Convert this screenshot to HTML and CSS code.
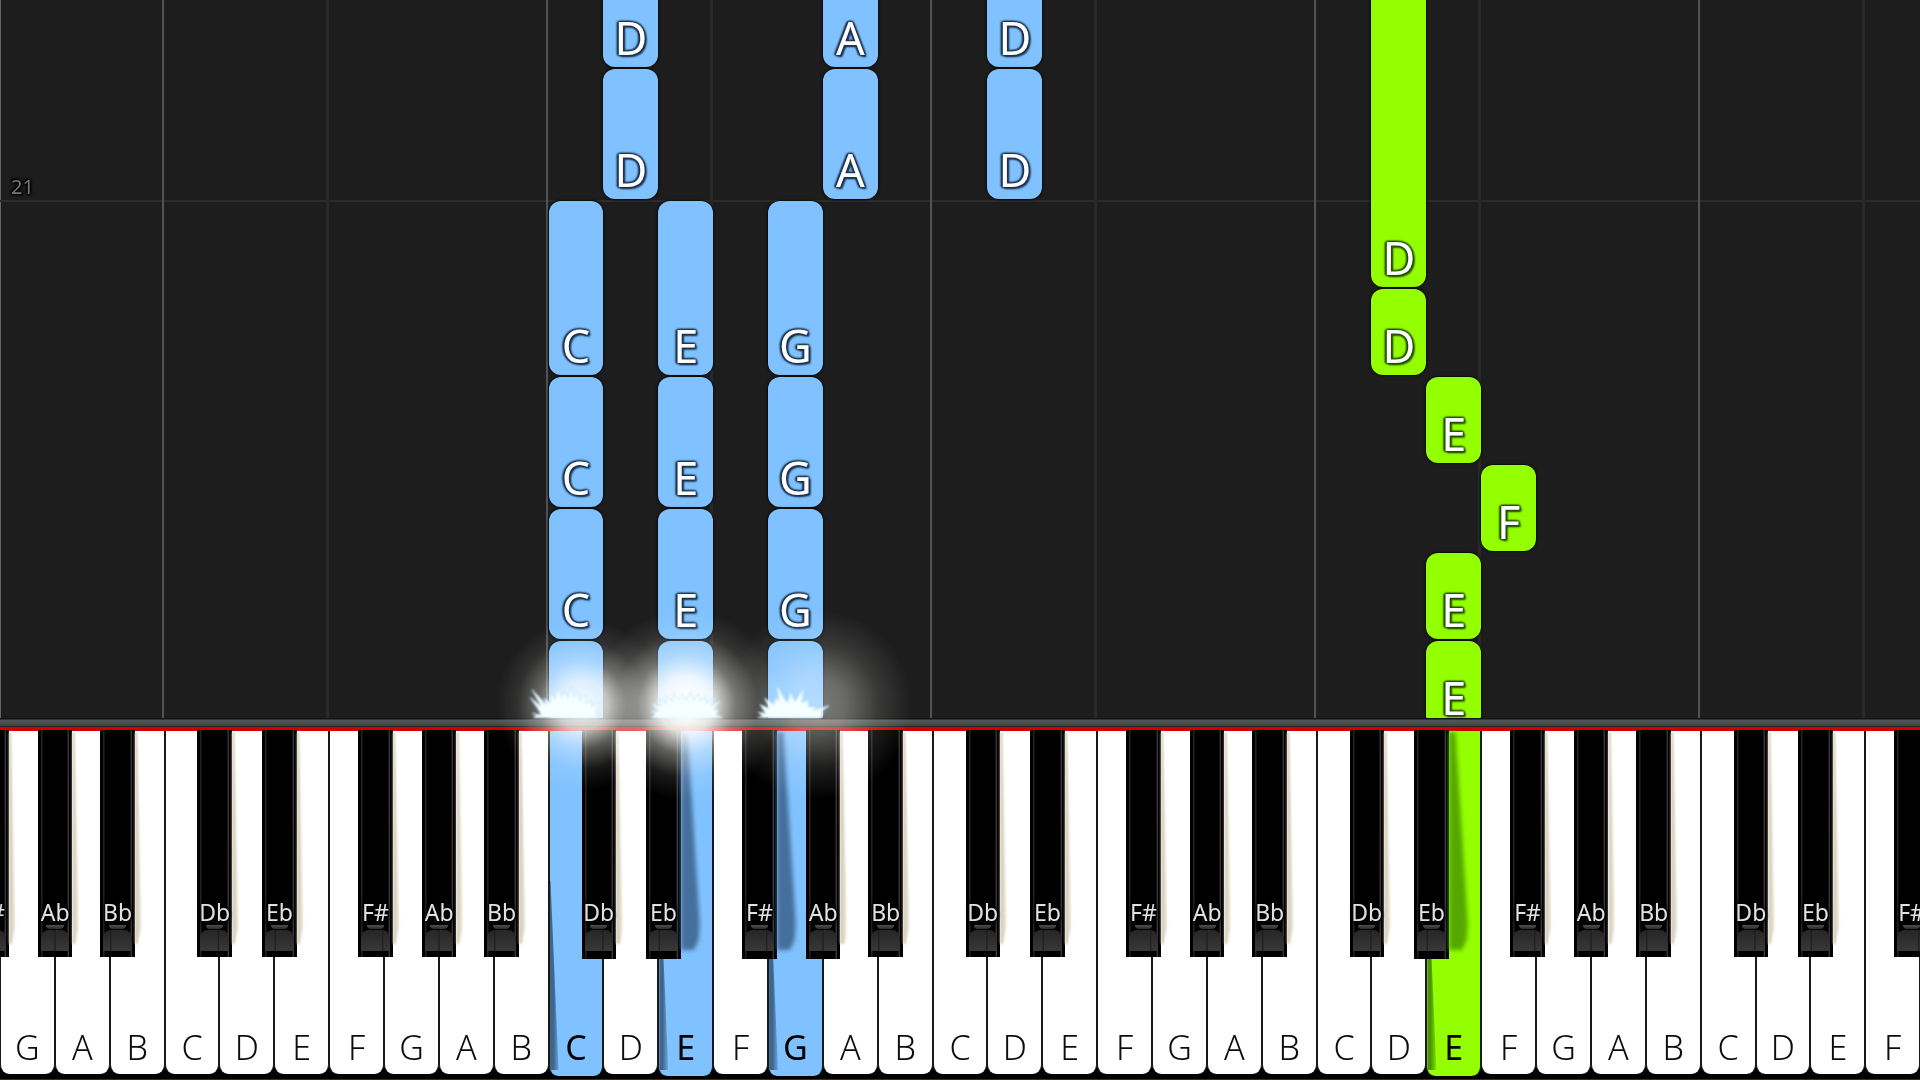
FILE: index.html
```html
<!DOCTYPE html>
<html lang="en">
<head>
    <meta charset="UTF-8">
    <meta name="viewport" content="width=device-width, initial-scale=1.0">
    <title>Piano roll</title>
    <link rel="stylesheet" href="styles.css">
</head>
<body>
    <main class="player">
        <section class="roll" id="roll" aria-label="Falling notes">
            <div class="measure"></div>
            <span class="measure-number">21</span>
        </section>
        <div class="rail"></div>
        <section class="keyboard" id="keyboard" aria-label="Piano keyboard"></section>
    </main>

    <script src="script.js"></script>
</body>
</html>
```

FILE: styles.css
```css
* {
    box-sizing: border-box;
}
body {
    margin: 0;
    background: #000;
    font-family: "Noto Sans", "Open Sans", sans-serif;
}
.player {
    display: flex;
    flex-direction: column;
    height: 100vh;
    min-height: 600px;
    overflow: hidden;
}

/* falling notes: one column per white key, one row per beat step */
.roll {
    flex: 1;
    min-height: 0;
    display: grid;
    grid-template-columns: repeat(35, 1fr);
    grid-template-rows: 24px repeat(16, 44px);
    align-content: start;
    overflow: hidden;
    background: #1d1d1d;
    box-shadow: inset 1px 0 #666;
}
.line {
    grid-row: 1 / -1;
    border-right: 3px solid #292929;
}
.line.octave {
    margin-right: 1px;
    border-right: 2px solid #525252;
}
.measure {
    grid-column: 1 / -1;
    grid-row: 6;
    border-top: 2px solid #2b2b2b;
}
.measure-number {
    grid-column: 1;
    grid-row: 5;
    align-self: end;
    padding-left: 11px;
    font-size: 20px;
    line-height: 26px;
    color: #777;
    text-shadow: 0 0 2px #000, 0 0 2px #000, 1px 1px 2px #000, -1px -1px 2px #000, 0 0 3px #000, 0 0 4px #000;
}
.note {
    position: relative;
    display: flex;
    justify-content: center;
    align-items: flex-end;
    margin: 1px 0;
    padding-bottom: 3px;
    border-radius: 12px;
    box-shadow: 0 0 2px 1px #0a0a0a;
    color: #fff;
    font-size: 45px;
    line-height: 52px;
}
.note.left {
    background: #80c2ff;
    text-shadow: 0 0 2px #1c3450, 1px 1px 2px #1c3450, -1px -1px 2px #1c3450, 1px -1px 2px #1c3450, -1px 1px 2px #1c3450, 2px 2px 2px #1c3450, -2px 0 2px #1c3450;
}
.note.right {
    background: #94ff00;
    text-shadow: 0 0 2px #245000, 1px 1px 2px #245000, -1px -1px 2px #245000, 1px -1px 2px #245000, -1px 1px 2px #245000, 2px 2px 2px #245000, -2px 0 2px #245000;
}
.note.from-above {
    margin-top: 0;
    border-top-left-radius: 0;
    border-top-right-radius: 0;
}

.rail {
    height: 13px;
    background: linear-gradient(#111 1px, #585858 2px, #404040 8px, #111 9px, #d00000 9px);
}

/* keyboard */
.keyboard {
    position: relative;
    display: flex;
    height: 349px;
    padding-bottom: 5px;
    background: #000;
    border-bottom: 1px solid #3a3018;
}
.slot {
    position: relative;
    flex: 1 1 0;
    min-width: 0;
}
.key {
    margin: 0;
    padding: 0;
    border: 0;
    font-family: inherit;
    cursor: pointer;
}
.white {
    position: relative;
    display: flex;
    justify-content: center;
    align-items: flex-end;
    width: 100%;
    height: 343px;
    padding-bottom: 5px;
    border: 1px solid #1a1a14;
    border-top: 0;
    border-bottom: 0;
    border-radius: 0 0 9px 9px;
    background: #fff;
    color: #0c0c0c;
    font-size: 34px;
    font-weight: 350;
    line-height: 44px;
}
.white.pressed {
    height: 345px;
    padding-bottom: 7px;
    color: #000;
    font-weight: 400;
}
.white.pressed.left {
    background: #80c2ff;
}
.white.pressed.right {
    background: #94ff00;
}
.white.pressed::before {
    content: "";
    position: absolute;
    left: 0;
    top: 150px;
    bottom: 6px;
    width: 9px;
    clip-path: polygon(0 0, 10% 0, 100% 100%, 0 100%);
    background: linear-gradient(90deg, #3f668f 40%, rgba(63, 102, 143, 0.3));
}
.white.pressed.right::before {
    background: linear-gradient(90deg, #4c9400 40%, rgba(76, 148, 0, 0.3));
}

.black {
    position: absolute;
    z-index: 2;
    top: -1px;
    left: 60%;
    width: 63%;
    height: 227px;
    background:
        linear-gradient(90deg, transparent 3px, #222 3px, #222 4px, transparent 5px),
        linear-gradient(270deg, transparent 3px, #3a3a3a 3px, #303030 4px, transparent 5px),
        #000;
}
.black.down {
    height: 229px;
}
.black.db { left: 60%; --seam: 64%; }
.black.eb { left: 78%; --seam: 35%; }
.black.fs { left: 53%; --seam: 75%; }
.black.ab { left: 69%; --seam: 50%; }
.black.bb { left: 83%; --seam: 27%; }
.black.edge {
    left: -47%;
}
.black .name {
    position: absolute;
    left: 50%;
    top: 168px;
    transform: translateX(-50%);
    font-size: 23px;
    line-height: 28px;
    color: #e2e2e2;
    text-shadow: 0 0 2px #000, 0 0 3px #000, 0 0 4px #000, 1px 1px 3px #000;
}
.black::before {
    content: "";
    position: absolute;
    left: 25%;
    right: 25%;
    top: 195px;
    height: 4px;
    border-radius: 0 0 9px 9px;
    background: linear-gradient(#505050, #2a2a2a);
}
.black::after {
    content: "";
    position: absolute;
    left: 3px;
    right: 3px;
    top: 200px;
    height: 21px;
    border-radius: 8px 8px 1px 1px;
    background:
        linear-gradient(90deg, transparent calc(var(--seam) - 1px), #191919 var(--seam), transparent calc(var(--seam) + 1px)),
        linear-gradient(#262626, #383838);
}
/* blur sits on the wrapper so that the cut shape inside gets soft edges */
.shade {
    position: absolute;
    z-index: -1;
    left: 100%;
    top: 2px;
    width: 6px;
    height: 212px;
    filter: blur(1px);
}
.shade::before {
    content: "";
    display: block;
    height: 100%;
    clip-path: polygon(0 0, 40% 0, 100% 92%, 50% 100%, 0 100%);
    background: linear-gradient(90deg, #d0ccba, #e4e0cf);
}
.down .shade {
    width: 19px;
    height: 218px;
    filter: blur(2px);
}
.down .shade::before {
    background: #456f9c;
    clip-path: polygon(-20% 0, 35% 0, 100% 88%, 95% 95%, 70% 100%, -20% 100%);
}
.down.over-right .shade::before {
    background: #55a800;
}
/* the black key right of the pressed one only sinks, its shade stays light */
.down.plain .shade {
    width: 6px;
    height: 212px;
    filter: blur(1px);
}
.down.plain .shade::before {
    background: linear-gradient(90deg, #d0ccba, #e4e0cf);
}

/* light where a note hits the keyboard */
.glow {
    position: absolute;
    z-index: 3;
    left: 50%;
    top: -26px;
    width: 190px;
    height: 190px;
    transform: translate(-50%, -50%);
    border-radius: 50%;
    pointer-events: none;
    mix-blend-mode: screen;
    background: radial-gradient(closest-side, rgba(255, 255, 252, 1) 12%, rgba(255, 255, 248, 0.85) 30%, rgba(255, 255, 248, 0.38) 52%, rgba(255, 255, 248, 0.1) 76%, transparent);
}
.glow.low {
    left: 60%;
    width: 170px;
    height: 170px;
    opacity: 0.85;
}
.glow.soft {
    left: 90%;
    width: 190px;
    height: 190px;
    background: radial-gradient(closest-side, rgba(255, 255, 248, 0.42), rgba(255, 255, 248, 0.34) 30%, rgba(255, 255, 248, 0.12) 65%, transparent);
}
.spark {
    position: absolute;
    z-index: 4;
    left: 50%;
    bottom: 100%;
    width: 76px;
    height: 34px;
    margin-bottom: 13px;
    transform: translateX(-50%);
    pointer-events: none;
    fill: #f6ffff;
    stroke: #c4e8ff;
    stroke-width: 1;
    filter: blur(1px);
}
.spark.lean {
    left: 34%;
}
```

FILE: script.js
```js
const roll = document.getElementById('roll');
const keyboard = document.getElementById('keyboard');

const names = ['G', 'A', 'B', 'C', 'D', 'E', 'F'];
const keyCount = 35;

// [column, first row line, last row line, name, hand]
const notes = [
    [12, 1, 3, 'D', 'left'],
    [12, 3, 6, 'D', 'left'],
    [16, 1, 3, 'A', 'left'],
    [16, 3, 6, 'A', 'left'],
    [19, 1, 3, 'D', 'left'],
    [19, 3, 6, 'D', 'left'],
    [26, 1, 8, 'D', 'right'],
    [26, 8, 10, 'D', 'right'],
    [27, 10, 12, 'E', 'right'],
    [28, 12, 14, 'F', 'right'],
    [27, 14, 16, 'E', 'right'],
    [27, 16, 18, 'E', 'right']
];
// repeated C major chord
[[11, 'C'], [13, 'E'], [15, 'G']].forEach(([column, name]) => {
    notes.push([column, 6, 10, name, 'left']);
    notes.push([column, 10, 13, name, 'left']);
    notes.push([column, 13, 16, name, 'left']);
    notes.push([column, 16, 18, '', 'left']);
});

// key number -> hand that holds it down
const pressed = { 10: 'left', 12: 'left', 14: 'left', 26: 'right' };

// black key that stands right after a white one
const blackAfter = {
    C: ['db', 'Db'],
    D: ['eb', 'Eb'],
    F: ['fs', 'F#'],
    G: ['ab', 'Ab'],
    A: ['bb', 'Bb']
};

const sparks = {
    10: 'M4 36 L8 33 L3 31 L13 33 L9 26 L1 14 L13 24 L3 6 L18 22 L16 15 L23 20 L22 10 L28 16 L30 4 L34 14 L38 9 L41 15 L45 2 L47 14 L53 9 L53 18 L60 11 L60 21 L67 18 L66 24 L76 19 L70 29 L73 36 Z',
    12: 'M3 36 L8 32 L3 29 L11 29 L4 21 L14 24 L9 15 L19 21 L18 12 L25 18 L27 9 L32 16 L36 10 L40 17 L45 8 L48 17 L53 10 L55 18 L61 13 L61 20 L70 15 L66 23 L76 18 L69 27 L75 28 L71 32 L79 36 Z',
    14: 'M0 36 L6 34 L1 30 L9 31 L3 22 L13 26 L8 15 L18 22 L19 15 L23 18 L21 2 L30 18 L33 19 L35 9 L40 19 L49 5 L47 20 L54 17 L54 24 L63 25 L59 28 L76 23 L67 30 L70 31 L66 36 Z'
};
const glowType = { 10: 'low', 12: '', 14: 'soft' };

function addLines() {
    for (let i = 0; i < keyCount; i++) {
        const name = names[i % 7];
        if (name === 'B' || name === 'E') {
            const line = document.createElement('div');
            line.className = name === 'B' ? 'line octave' : 'line';
            line.style.gridColumn = i + 1;
            roll.appendChild(line);
        }
    }
}

function addNotes() {
    notes.forEach(([column, start, end, name, hand]) => {
        const note = document.createElement('div');
        note.className = 'note ' + hand + (start === 1 ? ' from-above' : '');
        note.style.gridColumn = column;
        note.style.gridRow = start + ' / ' + end;
        note.textContent = name;
        roll.appendChild(note);
    });
}

function blackKey(type, label, extra) {
    return `<button class="key black ${type} ${extra}" type="button"><span class="shade"></span><span class="name">${label}</span></button>`;
}

function addKeys() {
    for (let i = 0; i < keyCount; i++) {
        const name = names[i % 7];
        const slot = document.createElement('div');
        slot.className = 'slot';
        let html = `<button class="key white ${pressed[i] ? 'pressed ' + pressed[i] : ''}" type="button">${name}</button>`;
        if (i === 0) {
            html += blackKey('fs', 'F#', 'edge');
        }
        if (blackAfter[name]) {
            let extra = '';
            if (pressed[i + 1]) {
                extra = 'down over-' + pressed[i + 1];
            } else if (pressed[i]) {
                extra = 'down plain';
            }
            html += blackKey(blackAfter[name][0], blackAfter[name][1], extra);
        }
        if (sparks[i]) {
            html += `<div class="glow ${glowType[i]}"></div>`;
            html += `<svg class="spark ${i === 10 ? 'lean' : ''}" viewBox="0 0 80 36" aria-hidden="true"><path d="${sparks[i]}"/></svg>`;
        }
        slot.innerHTML = html;
        keyboard.appendChild(slot);
    }
}

addLines();
addNotes();
addKeys();
```
